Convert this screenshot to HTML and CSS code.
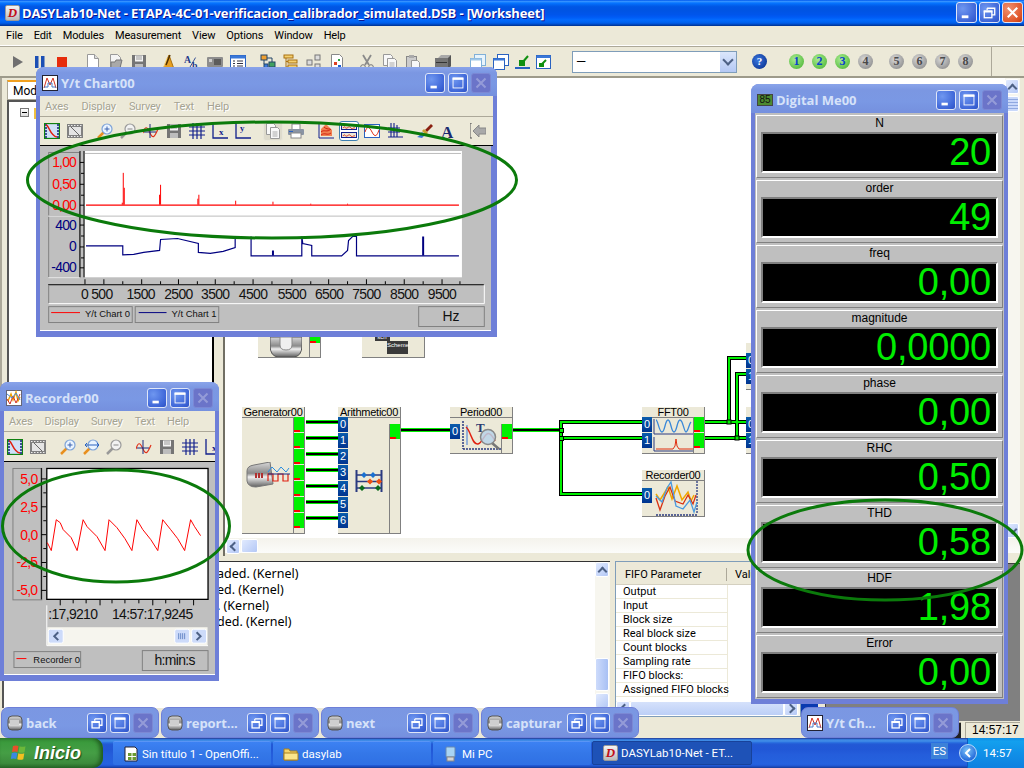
FILE: index.html
```html
<!DOCTYPE html>
<html lang="en">
<head>
<meta charset="utf-8">
<title>DASYLab10-Net</title>
<link rel="stylesheet" href="styles.css">
</head>
<body>
<svg class="defs" width="0" height="0" aria-hidden="true">
  <defs>
    <linearGradient id="metal" x1="0" y1="0" x2="0" y2="1"><stop offset="0" stop-color="#d8d8d8"/><stop offset=".45" stop-color="#8a8a8a"/><stop offset=".6" stop-color="#f0f0f0"/><stop offset="1" stop-color="#606060"/></linearGradient>
    <symbol id="c-min" viewBox="0 0 20 20"><rect x="5" y="13" width="7" height="3" fill="#fff"/></symbol>
    <symbol id="c-max" viewBox="0 0 20 20"><rect x="4.500" y="4.500" width="11" height="11" fill="none" stroke="#fff"/><rect x="4" y="4" width="12" height="2.500" fill="#fff"/></symbol>
    <symbol id="c-res" viewBox="0 0 20 20"><path d="M7.500 5.500h8v7h-3M7.500 5.500v2" fill="none" stroke="#fff" stroke-width="1.400"/><rect x="4.500" y="8.500" width="8" height="7" fill="none" stroke="#fff" stroke-width="1.400"/><rect x="4" y="8" width="9" height="2" fill="#fff"/></symbol>
    <symbol id="c-x" viewBox="0 0 20 20"><path d="M5 5l10 10M15 5L5 15" stroke="#fff" stroke-width="2.200" fill="none"/></symbol>
    <symbol id="w-line" viewBox="0 0 16 16"><rect x=".5" y=".5" width="15" height="15" fill="#fff" stroke="#223"/><path d="M2 13L5 3l3 7 3-7 3 10" fill="none" stroke="#d43020"/><path d="M2 12h4V8h4v4h4" fill="none" stroke="#4a78c8"/></symbol>
    <symbol id="w-rec" viewBox="0 0 16 16"><rect x=".5" y=".5" width="15" height="15" fill="#fff" stroke="#667"/><path d="M2 11l3-7 2 6 3-8 2 9 2-4" fill="none" stroke="#f0a000" stroke-width="1.400"/><path d="M1 9l3 5 3-8 3 7 4-9" fill="none" stroke="#d43020"/><path d="M1 4l5 4 4-5 4 7" fill="none" stroke="#4a90d8"/></symbol>
    <symbol id="w-block" viewBox="0 0 16 16"><rect x="1" y="1" width="14" height="14" rx="4" fill="url(#metal)" stroke="#555"/><rect x="3" y="5" width="9" height="5" fill="#cfcfcf"/></symbol>
    <symbol id="i-play" viewBox="0 0 16 16"><path d="M4 2l10 6-10 6z" fill="#707070"/></symbol>
    <symbol id="i-pause" viewBox="0 0 16 16"><rect x="3" y="2" width="3.500" height="12" fill="#1b4fb4"/><rect x="9" y="2" width="3.500" height="12" fill="#1b4fb4"/></symbol>
    <symbol id="i-stop" viewBox="0 0 16 16"><rect x="2" y="3" width="10" height="10" fill="#e62c0c"/></symbol>
    <symbol id="i-new" viewBox="0 0 16 16"><path d="M2.500.5h7l4 4v11h-11z" fill="#fff" stroke="#999"/><path d="M9.500.5v4h4" fill="#ddd" stroke="#999"/></symbol>
    <symbol id="i-open" viewBox="0 0 16 16"><path d="M2.500.5h7l3 3v11h-10z" fill="#f4f4f4" stroke="#999"/><path d="M3 8h4l1-2h6l-2 8H3z" fill="#a9a9a9" stroke="#777"/></symbol>
    <symbol id="i-save" viewBox="0 0 16 16"><path d="M1 1h14v14H1z" fill="#757575"/><rect x="4" y="1.500" width="8" height="6" fill="#f4f4f4"/><path d="M5 3h6M5 5h6" stroke="#999"/><rect x="4" y="10" width="8" height="5" fill="#bdbdbd"/></symbol>
    <symbol id="i-metro" viewBox="0 0 16 16"><path d="M8 1l5 14H2z" fill="#e8a020" stroke="#a87010"/><path d="M9 1L5 11" stroke="#503000" stroke-width="1.500"/><path d="M2 15L6 4" stroke="#ffd878"/></symbol>
    <symbol id="i-ab" viewBox="0 0 18 18"><text x="0" y="10" class="sy-a">A</text><path d="M6 16L13 4" stroke="#1e3a8a"/><text x="9" y="17" class="sy-a">b</text></symbol>
    <symbol id="i-card" viewBox="0 0 16 16"><rect y="3" width="16" height="10" rx="1" fill="#8d8d8d"/><rect x="2" y="5" width="3" height="3" fill="#cfcfcf"/><rect x="7" y="5" width="7" height="6" fill="#5c5c5c"/></symbol>
    <symbol id="i-list" viewBox="0 0 16 16"><rect x=".5" y="1.500" width="15" height="13" fill="#fff" stroke="#2a62c0"/><rect x=".5" y="1.500" width="15" height="3" fill="#3a78d8"/><path d="M3 7h2M7 7h6M3 9.500h2M7 9.500h6M3 12h2M7 12h6" stroke="#334"/></symbol>
    <symbol id="i-tree" viewBox="0 0 16 16"><rect x="1" y="1" width="6" height="5" fill="#f0a030" stroke="#246"/><rect x="9" y="8" width="6" height="5" fill="#40a060" stroke="#246"/><rect x="4" y="10" width="4" height="5" fill="#3a78d8" stroke="#246"/><path d="M4 6v4M7 4h5v4" stroke="#246" fill="none"/></symbol>
    <symbol id="i-tree2" viewBox="0 0 16 16"><rect x="1" y="1" width="9" height="3" fill="#f4d070" stroke="#a87010"/><rect x="5" y="6" width="9" height="3" fill="#f4d070" stroke="#a87010"/><rect x="5" y="11" width="9" height="3" fill="#f4d070" stroke="#a87010"/><path d="M3 4v9h2M3 7.500h2" stroke="#a87010" fill="none"/></symbol>
    <symbol id="i-boxes" viewBox="0 0 16 16"><rect x="1" y="6" width="5" height="5" fill="#ddd" stroke="#777"/><rect x="9" y="1" width="5" height="5" fill="#ddd" stroke="#777"/><rect x="9" y="10" width="5" height="5" fill="#ddd" stroke="#777"/></symbol>
    <symbol id="i-docc" viewBox="0 0 16 16"><path d="M2.500.5h8l3 3v12h-11z" fill="#fff" stroke="#888"/><rect x="5" y="8" width="3" height="3" fill="#e04020"/><rect x="9" y="5" width="2" height="2" fill="#30a040"/><rect x="9" y="11" width="3" height="3" fill="#2060d0"/></symbol>
    <symbol id="i-cut" viewBox="0 0 16 16"><path d="M4 1l6 10M12 1L6 11" stroke="#8a8a8a" stroke-width="1.800"/><circle cx="4" cy="13" r="2.300" fill="none" stroke="#777"/><circle cx="12" cy="13" r="2.300" fill="none" stroke="#777"/></symbol>
    <symbol id="i-copy" viewBox="0 0 16 16"><path d="M1.500.5h7l2 2v9h-9z" fill="#f8f8f8" stroke="#999"/><path d="M5.500 4.500h7l2 2v9h-9z" fill="#f8f8f8" stroke="#999"/><path d="M7.500 9h5M7.500 11h5M7.500 13h5" stroke="#aaa"/></symbol>
    <symbol id="i-paste" viewBox="0 0 16 16"><rect x="1.500" y="2.500" width="10" height="12" fill="#ccc" stroke="#888"/><rect x="4" y="1" width="5" height="3" fill="#aaa"/><path d="M6.500 6.500h6l2 2v7h-8z" fill="#f8f8f8" stroke="#999"/></symbol>
    <symbol id="i-box3d" viewBox="0 0 16 16"><path d="M3 4l3-3h10v3H3z" fill="#a9a9a9"/><rect y="4" width="13" height="12" fill="#757575"/><rect x="1" y="8" width="11" height="1" fill="#333"/><path d="M13 4l3-3v11l-3 4z" fill="#555"/></symbol>
    <symbol id="i-cas1" viewBox="0 0 16 16"><rect x="4.500" y=".5" width="11" height="11" fill="#e8f4fc" stroke="#80b0d8"/><rect x=".5" y="4.500" width="11" height="11" fill="#fff" stroke="#80b0d8"/><rect x=".5" y="4.500" width="11" height="2" fill="#a0c8e8"/></symbol>
    <symbol id="i-cas2" viewBox="0 0 16 16"><rect x="4.500" y=".5" width="11" height="11" fill="#fff" stroke="#2a62c0"/><rect x=".5" y="4.500" width="11" height="11" fill="#fff" stroke="#2a62c0"/><rect x=".5" y="4.500" width="11" height="2" fill="#3a78d8"/></symbol>
    <symbol id="i-dn" viewBox="0 0 16 16"><rect x="4" y="6" width="6" height="6" fill="#109010"/><path d="M7 9l6-7" stroke="#109010" stroke-width="2"/><path d="M0 14h15" stroke="#2a62c0" stroke-width="2"/></symbol>
    <symbol id="i-win" viewBox="0 0 16 16"><rect x=".5" y="1.500" width="14" height="13" fill="#fff" stroke="#2a62c0"/><rect x=".5" y="1.500" width="14" height="2.500" fill="#3a78d8"/><rect x="3" y="9" width="5" height="4" fill="#109010"/><path d="M5 11l5-5" stroke="#109010" stroke-width="2"/></symbol>
    <symbol id="i-film-c" viewBox="0 0 16 16"><rect x=".5" y=".5" width="15" height="15" fill="#cfe0f8" stroke="#108010" stroke-width="1.300"/><path d="M2 1v14M14 1v14" stroke="#1a2a80" stroke-width="1.600" stroke-dasharray="2 1"/><path d="M2 2c3 0 4 11 11 12" fill="none" stroke="#e02010" stroke-width="1.600"/></symbol>
    <symbol id="i-film" viewBox="0 0 16 16"><rect y="1" width="16" height="14" fill="#808080"/><rect x="2" y="4" width="12" height="8" fill="#e4e4e4"/><path d="M1 2.500h14M1 13.500h14" stroke="#eee" stroke-dasharray="1.500 1.500"/><path d="M4 4l8 8" stroke="#666"/></symbol>
    <symbol id="i-zi" viewBox="0 0 16 16"><path d="M1 15l6-6" stroke="#e89020" stroke-width="2.500"/><circle cx="10" cy="6" r="5" fill="#eaf4ff" stroke="#7fa4d8" stroke-width="1.200"/><path d="M7.500 6h5M10 3.500v5" stroke="#3a62b0"/></symbol>
    <symbol id="i-zh" viewBox="0 0 16 16"><path d="M1 15l6-6" stroke="#e89020" stroke-width="2.500"/><circle cx="10" cy="6" r="5" fill="#eaf4ff" stroke="#7fa4d8" stroke-width="1.200"/><path d="M2 6h14M4 4L2 6l2 2M14 4l2 2-2 2" fill="none" stroke="#2a62c0"/></symbol>
    <symbol id="i-zo" viewBox="0 0 16 16"><path d="M1 15l6-6" stroke="#999" stroke-width="2.500"/><circle cx="10" cy="6" r="5" fill="#f2f2f2" stroke="#9a9a9a" stroke-width="1.200"/><path d="M7.500 6h5" stroke="#888"/></symbol>
    <symbol id="i-cur" viewBox="0 0 16 16"><path d="M0 10c2-7 4-7 7 0s5 3 8-4" fill="none" stroke="#e03018" stroke-width="1.200"/><path d="M7 1v14M1 9h12" stroke="#1a2a80"/></symbol>
    <symbol id="i-grid" viewBox="0 0 16 16"><path d="M4 0v16M8 0v16M12 0v16M0 4h16M0 8h16M0 12h16" stroke="#12208c" stroke-width="1.200"/></symbol>
    <symbol id="i-xa" viewBox="0 0 16 16"><path d="M1 0v15h15" fill="none" stroke="#12208c" stroke-width="1.300"/><text x="7" y="12" class="sy-x">x</text></symbol>
    <symbol id="i-ya" viewBox="0 0 16 16"><path d="M1 0v15h15" fill="none" stroke="#12208c" stroke-width="1.300"/><text x="5" y="8" class="sy-x">y</text></symbol>
    <symbol id="i-print" viewBox="0 0 16 16"><rect x="4" y="1" width="8" height="6" fill="#fff" stroke="#888"/><rect y="6" width="16" height="6" rx="1" fill="#8a94a4"/><rect x="3" y="10" width="10" height="5" fill="#fff" stroke="#888"/><rect x="1" y="8" width="4" height="1" fill="#2a62c0"/></symbol>
    <symbol id="i-map" viewBox="0 0 16 16"><path d="M1 0v15h15" fill="none" stroke="#12208c"/><path d="M3 13V6l5-5 6 6v6z" fill="#f08050"/><path d="M3 9c3-3 6 1 10-3M3 12c4-3 6 1 10-2M6 4c2 2 4 2 6 2" fill="none" stroke="#d02010"/></symbol>
    <symbol id="i-w2" viewBox="0 0 16 16"><rect x=".5" y="1.500" width="15" height="5" fill="#ece9d8" stroke="#12208c"/><rect x=".5" y="9.500" width="15" height="5" fill="#ece9d8" stroke="#12208c"/><path d="M2 5c2-3 2 1 4 0s2-2 4 0 2-1 4 0M2 13c2-3 2 1 4 0s2-2 4 0 2-1 4 0" fill="none" stroke="#e03018"/></symbol>
    <symbol id="i-w1" viewBox="0 0 16 16"><rect x=".5" y="1.500" width="15" height="13" fill="#fff" stroke="#2a62c0"/><path d="M1 9c2-6 4-6 7 0s5 4 7-2" fill="none" stroke="#e03018"/></symbol>
    <symbol id="i-tick" viewBox="0 0 16 16"><path d="M4 0v14M7 0v14M10 2v12M1 14h15M1 5h12M1 9h12" stroke="#12208c" stroke-width="1.100"/></symbol>
    <symbol id="i-brush" viewBox="0 0 16 16"><path d="M8 7l6-6 2 2-6 6z" fill="#8a2010"/><path d="M7 6l4 4-2 2-4-4z" fill="#c8a030"/><path d="M5 9l3 3-3 3-5-1c3-1 3-3 5-5z" fill="#3a78d8"/></symbol>
    <symbol id="i-a" viewBox="0 0 16 16"><text x="1" y="15" class="sy-big">A</text></symbol>
    <symbol id="i-back" viewBox="0 0 16 16"><path d="M2 0H0v15h2" fill="none" stroke="#555"/><path d="M3 8l6-6v3h7v6H9v3z" fill="#a9a9a9" stroke="#888"/></symbol>
  </defs>
</svg>

<div class="screen">
  <div class="app">
    <header class="titlebar">
      <span class="app-logo">D</span>
      <h1 class="app-title">DASYLab10-Net - ETAPA-4C-01-verificacion_calibrador_simulated.DSB - [Worksheet]</h1>
      <span class="cap-btn blue big"><svg><use href="#c-min"/></svg></span>
      <span class="cap-btn blue big"><svg><use href="#c-res"/></svg></span>
      <span class="cap-btn red big"><svg><use href="#c-x"/></svg></span>
    </header>
    <nav class="menubar">
      <span>File</span><span>Edit</span><span>Modules</span><span>Measurement</span><span>View</span><span>Options</span><span>Window</span><span>Help</span>
    </nav>
    <div class="toolbar">
      <div class="tb-group"><svg class="ic"><use href="#i-play"/></svg><svg class="ic"><use href="#i-pause"/></svg><svg class="ic"><use href="#i-stop"/></svg></div>
      <div class="tb-group"><svg class="ic"><use href="#i-new"/></svg><svg class="ic"><use href="#i-open"/></svg><svg class="ic"><use href="#i-save"/></svg></div>
      <div class="tb-group"><svg class="ic"><use href="#i-metro"/></svg><svg class="ic"><use href="#i-ab"/></svg><svg class="ic"><use href="#i-card"/></svg><svg class="ic"><use href="#i-list"/></svg></div>
      <div class="tb-group"><svg class="ic"><use href="#i-tree"/></svg><svg class="ic"><use href="#i-tree2"/></svg><svg class="ic"><use href="#i-boxes"/></svg><svg class="ic"><use href="#i-docc"/></svg></div>
      <div class="tb-group"><svg class="ic"><use href="#i-cut"/></svg><svg class="ic"><use href="#i-copy"/></svg><svg class="ic"><use href="#i-paste"/></svg></div>
      <div class="tb-group"><svg class="ic"><use href="#i-box3d"/></svg></div>
      <div class="tb-group tb-wide"><svg class="ic"><use href="#i-cas1"/></svg><svg class="ic"><use href="#i-cas2"/></svg></div>
      <div class="tb-group tb-tight"><svg class="ic"><use href="#i-dn"/></svg><svg class="ic"><use href="#i-win"/></svg></div>
      <div class="combo"><span class="combo-text">—</span><span class="combo-btn"></span></div>
      <span class="help">?</span>
      <div class="nums">
        <span class="num on">1</span><span class="num on">2</span><span class="num on">3</span><span class="num">4</span>
        <span class="num sep">5</span><span class="num">6</span><span class="num">7</span><span class="num">8</span>
      </div>
      <span class="tb-end"></span>
    </div>
    <main class="work">
      <div class="work-top">
        <aside class="side">
          <div class="side-panel">
            <div class="tab">Modules</div>
            <div class="tree"><span class="tree-toggle"></span><span class="tree-folder"></span></div>
          </div>
          <div class="splitter"></div>
        </aside>
        <div class="canvas-wrap">
          <div class="canvas-row">
            <div class="canvas">
              <svg class="wires" viewBox="225 78 780 460">
                <path class="w-edge-g" d="M306 422H338M306 438H338M306 454H338M306 470H338M306 486H338M306 502H338M306 518H338M401 430H450M513 430H561"/>
                <path class="w-core-k" d="M306 422H338M306 438H338M306 454H338M306 470H338M306 486H338M306 502H338M306 518H338M401 430H450M513 430H561"/>
                <path class="w-edge-k" d="M561 430V422H642M561 422V494H642M561 438H642M705 422H746M705 438H746M729 422V358H746M737 438V374H746"/>
                <path class="w-core-g" d="M561 430V422H642M561 422V494H642M561 438H642M705 422H746M705 438H746M729 422V358H746M737 438V374H746"/>
                <g class="junctions"><rect x="559.500" y="428.500" width="4" height="4"/><rect x="559.500" y="436.500" width="4" height="4"/><rect x="727" y="420" width="4" height="4"/><rect x="735" y="436" width="4" height="4"/></g>
              </svg>

              <div class="node n-up1">
                <div class="node-body"><div class="art art-wide"><svg class="art-up1" viewBox="0 0 32 20"><path d="M0 0h32v8q0 12-9 12H9Q0 20 0 8z" fill="url(#metal)" stroke="#555"/><path d="M10 0h12v8q0 5-6 5t-6-5z" fill="#f0f0f0" stroke="#888"/></svg></div>
                <div class="ports-out"><span class="port-out short"></span></div></div>
              </div>
              <div class="node n-up2">
                <div class="node-body"><div class="ports-in"><span class="port-in short"></span></div>
                  <div class="art art-scheme"><span class="scheme-a">sch</span><span class="scheme-b">Scheme</span></div></div>
              </div>

              <div class="node n-gen">
                <div class="node-title">Generator00</div>
                <div class="node-body">
                  <div class="art"><svg class="art-gen" viewBox="0 0 44 26">
                    <path d="M1 9q0-5 7-6l16-3 3 22-17 3q-8 0-9-6z" fill="url(#metal)" stroke="#777"/>
                    <path d="M10 11v5M13 11v5M16 11v5" stroke="#b03030" stroke-width="2"/>
                    <path d="M22 10l4-5 5 5 4-5 5 5 3-4" fill="none" stroke="#2a8ee0"/>
                    <path d="M22 19v-7h5v7h5v-7h5v7h5v-7" fill="none" stroke="#e02010" stroke-width="1.200"/>
                    <path d="M22 12h22" stroke="#1a2a80"/>
                  </svg></div>
                  <div class="ports-out"><span class="port-out"></span><span class="port-out"></span><span class="port-out"></span><span class="port-out"></span><span class="port-out"></span><span class="port-out"></span><span class="port-out"></span></div>
                </div>
              </div>
              <div class="node n-ari">
                <div class="node-title">Arithmetic00</div>
                <div class="node-body">
                  <div class="ports-in"><span class="port-in">0</span><span class="port-in">1</span><span class="port-in">2</span><span class="port-in">3</span><span class="port-in">4</span><span class="port-in">5</span><span class="port-in">6</span></div>
                  <div class="art"><svg class="art-ari" viewBox="0 0 28 22">
                    <path d="M1.500 0v22M26.500 0v22" stroke="#2a3a80" stroke-width="2"/><path d="M1 5h26M1 11.500h26M1 18h26" stroke="#2a3a80" stroke-width="1.500"/>
                    <path d="M6 5l3-3 3 3-3 3zM15 5l3-3 3 3-3 3z" fill="#1a70d0"/><path d="M12 11.500l3-3 3 3-3 3zM21 11.500l3-3 3 3-3 3z" fill="#f05010"/><path d="M4 18l3-3 3 3-3 3zM20 18l3-3 3 3-3 3z" fill="#0a6a1a"/>
                  </svg></div>
                  <div class="ports-out offset"><span class="port-out"></span></div>
                </div>
              </div>
              <div class="node n-per">
                <div class="node-title">Period00</div>
                <div class="node-body">
                  <div class="ports-in offset"><span class="port-in">0</span></div>
                  <div class="art"><svg class="art-per" viewBox="0 0 40 32">
                    <path d="M2 2v28M2 30h38" stroke="#2a3a80" stroke-dasharray="2 1" stroke-width="1.500"/>
                    <path d="M6 6v20" stroke="#3a78d8"/><path d="M5 8c5 4 6 18 12 17S25 4 34 22" fill="none" stroke="#e02010" stroke-width="1.500"/>
                    <text x="15" y="13" class="sy-t">T</text>
                    <path d="M31 24l7 6" stroke="#777" stroke-width="2.500"/><circle cx="27" cy="18" r="7.500" fill="#b8d4ea" fill-opacity=".85" stroke="#888" stroke-width="1.500"/>
                  </svg></div>
                  <div class="ports-out offset"><span class="port-out"></span></div>
                </div>
              </div>
              <div class="node n-fft">
                <div class="node-title">FFT00</div>
                <div class="node-body">
                  <div class="ports-in"><span class="port-in">0</span><span class="port-in">1</span></div>
                  <div class="art"><svg class="art-fft" viewBox="0 0 40 33">
                    <path d="M1 0v15h39M1 18v14h39" stroke="#2a3a80" fill="none"/>
                    <path d="M3 1c2 0 3 12 6 12s3-12 6-12 3 12 6 12 3-12 6-12 4 12 6 12 3-8 5-10" fill="none" stroke="#3a88d8" stroke-width="1.300"/>
                    <path d="M3 30h17l2-3 1-7 1 7 2 3h14" fill="none" stroke="#e03010"/>
                  </svg></div>
                  <div class="ports-out"><span class="port-out"></span><span class="port-out"></span></div>
                </div>
              </div>
              <div class="node n-rec">
                <div class="node-title">Recorder00</div>
                <div class="node-body">
                  <div class="ports-in offset"><span class="port-in">0</span></div>
                  <div class="art"><svg class="art-rec" viewBox="0 0 44 36">
                    <path d="M42 1v32M1 35h42" stroke="#2a3a80" stroke-width="1.300" stroke-dasharray="2 1"/>
                    <path d="M1 14l4 6 5-8 3-5 4 12 5-13 5 14 6-8 3 9 3-6" fill="none" stroke="#f0a800" stroke-width="1.500"/>
                    <path d="M1 18l4 12 5-14 5-9 5 14 8 3 5-9 5 9 3-9" fill="none" stroke="#d83010" stroke-width="1.300"/>
                    <path d="M1 16l6 6 5-14 4-6 5 24 7 3 7-9 4 12 3-10" fill="none" stroke="#4a9ae0" stroke-width="1.300"/>
                  </svg></div>
                </div>
              </div>
              <div class="node n-r1"><div class="ports-in offset-b"><span class="port-in">0</span><span class="port-in">1</span></div></div>
              <div class="node n-r2"><div class="ports-in offset-t"><span class="port-in">0</span><span class="port-in">1</span></div></div>
            </div>
            <div class="vscroll">
              <span class="sb-btn up"></span><span class="sb-thumb"></span><span class="sb-fill"></span><span class="sb-btn down"></span>
            </div>
          </div>
          <div class="hscroll"><span class="sb-btn left"></span><span class="sb-thumb-h"></span></div>
        </div>
      </div>
      <div class="work-bottom">
        <div class="log">
          <div class="log-text">
            <p>aded. (Kernel)</p>
            <p>ed. (Kernel)</p>
            <p>. (Kernel)</p>
            <p>ded. (Kernel)</p>
          </div>
          <div class="log-scroll"><span class="sb-btn up"></span><span class="sb-fill"></span><span class="sb-thumb-v"></span><span class="sb-btn blank"></span></div>
        </div>
        <div class="fifo">
          <div class="fifo-head"><span class="fh-a">FIFO Parameter</span><span class="fh-b">Value</span></div>
          <div class="fifo-rows">
            <div class="fr">Output</div><div class="fr">Input</div><div class="fr">Block size</div><div class="fr">Real block size</div><div class="fr">Count blocks</div><div class="fr">Sampling rate</div><div class="fr">FIFO blocks:</div><div class="fr">Assigned FIFO blocks</div>
          </div>
          <div class="fifo-scroll"><span class="sb-btn left"></span><span class="sb-thumb-f"></span><span class="sb-btn right"></span></div>
        </div>
        <div class="strip"><span class="strip-blue"></span></div>
        <div class="mdi"></div>
      </div>
    </main>
    <footer class="status"><span class="st-cell st-dark"></span><span class="st-cell">14:57:17</span></footer>
  </div>

  <section class="win w-chart">
    <header class="cap"><svg class="cap-icon"><use href="#w-line"/></svg><span class="cap-text">Y/t Chart00</span>
      <span class="cap-btn blue"><svg><use href="#c-min"/></svg></span><span class="cap-btn blue"><svg><use href="#c-max"/></svg></span><span class="cap-btn dim"><svg><use href="#c-x"/></svg></span></header>
    <nav class="imenu"><span>Axes</span><span>Display</span><span>Survey</span><span>Text</span><span>Help</span></nav>
    <div class="itools">
      <div class="tb-group"><svg class="ic"><use href="#i-film-c"/></svg><svg class="ic"><use href="#i-film"/></svg></div>
      <div class="tb-group"><svg class="ic"><use href="#i-zi"/></svg><svg class="ic"><use href="#i-zo"/></svg><svg class="ic"><use href="#i-cur"/></svg><svg class="ic"><use href="#i-save"/></svg><svg class="ic"><use href="#i-grid"/></svg><svg class="ic"><use href="#i-xa"/></svg><svg class="ic"><use href="#i-ya"/></svg></div>
      <div class="tb-group"><span class="ic-btn soft"><svg class="ic"><use href="#i-copy"/></svg></span><svg class="ic"><use href="#i-print"/></svg></div>
      <div class="tb-group"><svg class="ic"><use href="#i-map"/></svg><span class="ic-btn sel"><svg class="ic"><use href="#i-w2"/></svg></span><svg class="ic"><use href="#i-w1"/></svg><svg class="ic"><use href="#i-tick"/></svg></div>
      <div class="tb-group"><svg class="ic"><use href="#i-brush"/></svg><svg class="ic"><use href="#i-a"/></svg></div>
      <div class="tb-group"><svg class="ic"><use href="#i-back"/></svg></div>
    </div>
    <svg class="plot plot-chart" viewBox="40 147 451 185">
      <rect x="47.500" y="153.500" width="31" height="64" class="lblbox"/><rect x="47.500" y="217.500" width="31" height="62" class="lblbox"/>
      <path d="M47 217.500H79M47 279.500H79" stroke="#fff"/>
      <path d="M79 152V279M83 152V279" class="ax"/>
      <path d="M79 163.500h4M79 185.500h4M79 206.500h4M79 226.500h4M79 248.500h4M79 269.500h4M80 174.500h3M80 196.500h3M80 237.500h3M80 259.500h3" class="ax"/>
      <rect x="84" y="152" width="379" height="127" fill="#fff"/>
      <path d="M84 154.500H462M84 217.500H462" stroke="#bbb"/>
      <text x="75" y="168" class="yl red">1,00</text><text x="75" y="190" class="yl red">0,50</text><text x="75" y="211" class="yl red">0,00</text>
      <text x="75" y="231" class="yl navy">400</text><text x="75" y="253" class="yl navy">0</text><text x="75" y="274" class="yl navy">-400</text>
      <path d="M85 206.500H460" stroke="#f00" stroke-width="1.300" fill="none"/>
      <path d="M122.500 206V174M123.500 206V189M121.500 206V204M160 206V186M159 206V196M198.500 206V196M197.500 206V200M235.500 206V202M273 206V203M311 206V205M348 206V205" stroke="#f00" fill="none"/>
      <path d="M85 247.500H122V256.500L133 256 143 254 159 252 160 241 177 240 198 245V254L210 255 223 253 235 249V238M251 238V257.500H302V238L303 245 312 247V257.500H342L348 252 349 242 353 238H357V257.500H460" fill="none" stroke="#000080" stroke-width="1.200"/>
      <path d="M424 257V238M273 257V252" stroke="#000080" stroke-width="2"/>
      <path d="M47 286.500H485" stroke="#000" fill="none"/>
      <path d="M84 281v5M103 281v5M141 281v5M178 281v5M215 281v5M253 281v5M292 281v5M329 281v5M367 281v5M405 281v5M443 281v5M122 283v3M160 283v3M197 283v3M234 283v3M272 283v3M311 283v3M348 283v3M386 283v3M424 283v3M461 283v3" stroke="#000" fill="none"/>
      <path d="M47.500 305.500H485.500V287" fill="none" stroke="#fff"/><path d="M47.500 305V287" stroke="#808080"/>
      <text x="83.500" y="301" class="xl mid">0</text><text x="101" y="301" class="xl mid">500</text><text x="140" y="301" class="xl mid">1500</text><text x="178" y="301" class="xl mid">2500</text><text x="215" y="301" class="xl mid">3500</text><text x="253" y="301" class="xl mid">4500</text><text x="292" y="301" class="xl mid">5500</text><text x="329.500" y="301" class="xl mid">6500</text><text x="367" y="301" class="xl mid">7500</text><text x="405" y="301" class="xl mid">8500</text><text x="443" y="301" class="xl mid">9500</text>
      <rect x="47.500" y="308.500" width="84" height="16" class="bevel"/><rect x="134.500" y="308.500" width="84" height="16" class="bevel"/><rect x="419.500" y="308.500" width="66" height="20" class="bevel"/>
      <path d="M50 314.500H79" stroke="#f00"/><path d="M138 314.500H166" stroke="#000080"/>
      <text x="84" y="319" class="lg">Y/t Chart 0</text><text x="171" y="319" class="lg">Y/t Chart 1</text><text x="452" y="323" class="xl mid hz">Hz</text>
    </svg>
  </section>

  <section class="win w-rec">
    <header class="cap"><svg class="cap-icon"><use href="#w-rec"/></svg><span class="cap-text">Recorder00</span>
      <span class="cap-btn blue"><svg><use href="#c-min"/></svg></span><span class="cap-btn blue"><svg><use href="#c-max"/></svg></span><span class="cap-btn dim"><svg><use href="#c-x"/></svg></span></header>
    <nav class="imenu imenu-rec"><span>Axes</span><span>Display</span><span>Survey</span><span>Text</span><span>Help</span></nav>
    <div class="itools itools-rec">
      <div class="tb-group"><svg class="ic"><use href="#i-film-c"/></svg><svg class="ic"><use href="#i-film"/></svg></div>
      <div class="tb-group"><svg class="ic"><use href="#i-zi"/></svg><svg class="ic"><use href="#i-zh"/></svg><svg class="ic"><use href="#i-zo"/></svg></div>
      <div class="tb-group"><svg class="ic"><use href="#i-cur"/></svg><svg class="ic"><use href="#i-save"/></svg><svg class="ic"><use href="#i-grid"/></svg><svg class="ic"><use href="#i-xa"/></svg></div>
    </div>
    <svg class="plot plot-rec" viewBox="4 462 211 213">
      <rect x="12.500" y="468.500" width="29" height="132" class="lblbox"/>
      <path d="M41 468V600" class="ax"/>
      <path d="M41 479h5M41 507h5M41 535h5M41 563h5M41 591h5M43 493h3M43 521h3M43 549h3M43 577h3" class="ax"/>
      <rect x="46.500" y="468.500" width="162" height="131.500" fill="#fff" stroke="#000" stroke-width="1.300"/>
      <text x="37" y="484" class="yl red">5,0</text><text x="37" y="512" class="yl red">2,5</text><text x="37" y="540" class="yl red">0,0</text><text x="37" y="568" class="yl red">-2,5</text><text x="37" y="596" class="yl red">-5,0</text>
      <polyline fill="none" stroke="#f00" points="47,543 51,551 56,520 60,523 63,530 71,538 77,551 83,520 87,527 97,537 105,551 109,520 117,528 125,539 132,551 137,520 143,530 151,540 158,551 163,520 171,530 178,539 185,551 191,520 195,527 201,536"/>
      <path d="M60 600v6M73 600v4M86 600v4M100 600v6M112 600v4M125 600v4M139 600v4M153 600v6M166 600v4M180 600v4M194 600v6" stroke="#000"/>
      <text x="48" y="620" class="xl">:17,9210</text><text x="112" y="620" class="xl">14:57:17,9245</text>
      <rect x="47" y="628" width="161" height="18" fill="#f6f5ee"/>
      <path d="M46.500 606V646.500H208.500" fill="none" stroke="#fff"/>
      <rect x="48" y="630" width="15" height="14" rx="2" class="sbt"/><path d="M58 633l-4 4 4 4" class="chev"/>
      <rect x="175" y="630" width="15" height="14" rx="2" class="sbt"/><path d="M179 634v6M181 634v6M183 634v6M185 634v6" stroke="#6a8ac8"/>
      <rect x="192" y="630" width="15" height="14" rx="2" class="sbt"/><path d="M197 633l4 4-4 4" class="chev"/>
      <rect x="13.500" y="652.500" width="67" height="16" class="bevel"/><path d="M16 659.500H26" stroke="#f00"/><text x="33" y="664" class="lg">Recorder 0</text>
      <rect x="142.500" y="651.500" width="66" height="20" class="bevel"/><text x="175" y="666" class="xl mid">h:min:s</text>
    </svg>
  </section>

  <section class="win w-meter">
    <header class="cap"><span class="meter-icon">85</span><span class="cap-text">Digital Me00</span>
      <span class="cap-btn blue"><svg><use href="#c-min"/></svg></span><span class="cap-btn blue"><svg><use href="#c-max"/></svg></span><span class="cap-btn dim"><svg><use href="#c-x"/></svg></span></header>
    <div class="meters">
      <div class="meter"><div class="meter-label">N</div><div class="meter-value">20</div></div>
      <div class="meter"><div class="meter-label">order</div><div class="meter-value">49</div></div>
      <div class="meter"><div class="meter-label">freq</div><div class="meter-value">0,00</div></div>
      <div class="meter"><div class="meter-label">magnitude</div><div class="meter-value">0,0000</div></div>
      <div class="meter"><div class="meter-label">phase</div><div class="meter-value">0,00</div></div>
      <div class="meter"><div class="meter-label">RHC</div><div class="meter-value">0,50</div></div>
      <div class="meter"><div class="meter-label">THD</div><div class="meter-value">0,58</div></div>
      <div class="meter"><div class="meter-label">HDF</div><div class="meter-value">1,98</div></div>
      <div class="meter"><div class="meter-label">Error</div><div class="meter-value">0,00</div></div>
    </div>
  </section>

  <section class="win-min m1"><svg class="cap-icon"><use href="#w-block"/></svg><span class="cap-text">back</span><span class="cap-btn blue"><svg><use href="#c-res"/></svg></span><span class="cap-btn blue"><svg><use href="#c-max"/></svg></span><span class="cap-btn dim"><svg><use href="#c-x"/></svg></span></section>
  <section class="win-min m2"><svg class="cap-icon"><use href="#w-block"/></svg><span class="cap-text">report...</span><span class="cap-btn blue"><svg><use href="#c-res"/></svg></span><span class="cap-btn blue"><svg><use href="#c-max"/></svg></span><span class="cap-btn dim"><svg><use href="#c-x"/></svg></span></section>
  <section class="win-min m3"><svg class="cap-icon"><use href="#w-block"/></svg><span class="cap-text">next</span><span class="cap-btn blue"><svg><use href="#c-res"/></svg></span><span class="cap-btn blue"><svg><use href="#c-max"/></svg></span><span class="cap-btn dim"><svg><use href="#c-x"/></svg></span></section>
  <section class="win-min m4"><svg class="cap-icon"><use href="#w-block"/></svg><span class="cap-text">capturar</span><span class="cap-btn blue"><svg><use href="#c-res"/></svg></span><span class="cap-btn blue"><svg><use href="#c-max"/></svg></span><span class="cap-btn dim"><svg><use href="#c-x"/></svg></span></section>
  <section class="win-min m5"><svg class="cap-icon"><use href="#w-line"/></svg><span class="cap-text">Y/t Ch...</span><span class="cap-btn blue"><svg><use href="#c-res"/></svg></span><span class="cap-btn blue"><svg><use href="#c-max"/></svg></span><span class="cap-btn dim"><svg><use href="#c-x"/></svg></span></section>

  <svg class="marks" viewBox="0 0 1024 768">
    <ellipse cx="272" cy="180" rx="244.500" ry="58"/>
    <ellipse cx="116" cy="526" rx="113.500" ry="56"/>
    <ellipse cx="885" cy="550" rx="137" ry="50"/>
  </svg>

  <footer class="taskbar">
    <div class="start"><svg class="flag" viewBox="0 0 18 18"><path d="M3 2q3-1 5.500 0L7.500 8Q5 7 2 8z" fill="#e8502a"/><path d="M9.500 2.200q3 1 6 0l-1 6q-3 1-6 0z" fill="#6cb83a"/><path d="M1.800 9q3-1 5.500 0l-1 6q-3-1-5.500 0z" fill="#3a88e0"/><path d="M8.300 9.200q3 1 6 0l-1 6q-3 1-6 0z" fill="#f4c020"/></svg><span>Inicio</span></div>
    <div class="tasks">
      <div class="task"><svg class="task-ic" viewBox="0 0 16 16"><path d="M2 1h10l2 2v12H2z" fill="#fff" stroke="#223"/><rect x="5" y="7" width="8" height="7" fill="#6a9a30"/><path d="M9 7v7M5 10.500h8" stroke="#fff"/></svg><span>Sin título 1 - OpenOffi...</span></div>
      <div class="task"><svg class="task-ic" viewBox="0 0 16 16"><path d="M1 3h5l1 2h7v9H1z" fill="#f4d468" stroke="#a88020"/><path d="M1 7h14v7H1z" fill="#fbe68c" stroke="#a88020"/></svg><span>dasylab</span></div>
      <div class="task"><svg class="task-ic" viewBox="0 0 16 16"><rect x="3" y="1" width="9" height="10" rx="1" fill="#a8d4f4" stroke="#6a8ab0"/><rect x="4" y="11" width="7" height="4" fill="#d4d4d4" stroke="#888"/></svg><span>Mi PC</span></div>
      <div class="task active"><span class="app-logo small">D</span><span>DASYLab10-Net - ET...</span></div>
    </div>
    <div class="lang">ES</div>
    <div class="tray"><span class="chev-btn"><svg viewBox="0 0 12 12"><path d="M8 2L4 6l4 4" fill="none" stroke="#fff" stroke-width="2"/></svg></span><span class="clock">14:57</span></div>
  </footer>
</div>
</body>
</html>
```

FILE: styles.css
```css
* { box-sizing: border-box; }
html, body { margin: 0; padding: 0; background: #ece9d8; }
body { font: 12px Roboto, "Liberation Sans", sans-serif; color: #000; overflow: hidden; }
.defs { position: absolute; }
p, h1 { margin: 0; font-weight: normal; }
.sy-a { font: bold 11px "Liberation Serif", serif; fill: #1e3a8a; }
.sy-x { font: bold 9px "Liberation Serif", serif; fill: #12208c; }
.sy-big { font: bold 17px "Liberation Serif", serif; fill: #1a2a70; }
.sy-t { font: bold 13px "Liberation Serif", serif; fill: #2a3a70; }

.screen { position: relative; width: 1024px; height: 768px; overflow: hidden; background: #ece9d8; }
.app { display: flex; flex-direction: column; height: 738px; }

/* main title */
.titlebar { height: 26px; flex: none; display: flex; align-items: center; padding: 0 1px 1px 5px; gap: 2px;
  background: linear-gradient(#0058ee 0%, #3593ff 6%, #127dff 10%, #036ffc 14%, #0262ee 20%, #0057e5 26%, #0054e3 40%, #0055eb 56%, #005bf5 66%, #026afe 76%, #0062ef 86%, #0052d6 92%, #0040ab 96%, #003092 100%); }
.app-logo { width: 15px; height: 16px; flex: none; background: linear-gradient(#f4f4f4, #bbb); border: 1px solid #999; border-radius: 2px; color: #c01018;
  font: italic bold 13px/14px "Liberation Serif", serif; text-align: center; }
.app-title { flex: 1; margin-left: 0; color: #fff; font: bold 13px "Open Sans", sans-serif; letter-spacing: -.13px; text-shadow: 1px 1px 0 #0f1089; white-space: nowrap; overflow: hidden; }

.cap-btn { flex: none; width: 20px; height: 20px; border-radius: 3px; border: 1px solid #dfe6f8; display: block; overflow: hidden; }
.cap-btn svg { display: block; width: 18px; height: 18px; }
.cap-btn.big { width: 21px; height: 21px; }
.cap-btn.big svg { width: 19px; height: 19px; }
.blue { background: radial-gradient(circle at 30% 30%, #6f97f0, #3e66d8 70%, #2e52c4); }
.red { background: radial-gradient(circle at 30% 30%, #f09070, #e0562a 70%, #c03810); }
.dim { background: #6b75c9; border-color: #7b88d4; }
.dim svg { opacity: .28; }

/* menu */
.menubar { height: 20px; flex: none; display: flex; align-items: center; gap: 11px; padding-left: 6px; background: #ece9d8; font-size: 11px; letter-spacing: -.15px; border-bottom: 1px solid #fff; }

/* toolbar */
.toolbar { height: 32px; flex: none; display: flex; align-items: center; padding-left: 9px; gap: 14px; background: #ece9d8; border-top: 1px solid #aca899; border-bottom: 2px solid #9d9a8a; }
.tb-group { display: flex; align-items: center; gap: 7px; flex: none; }
.tb-wide { margin-left: 5px; }
.tb-tight { margin-left: -8px; gap: 5px; }
.ic { width: 16px; height: 16px; flex: none; display: block; }
.combo { width: 165px; height: 22px; margin-left: 6px; background: #fff; border: 1px solid #7f9db9; display: flex; align-items: center; flex: none; }
.combo-text { flex: 1; padding-left: 3px; font-size: 13px; }
.combo-btn { width: 16px; height: 20px; background: linear-gradient(#dbe6fb, #b4c8f4); position: relative; }
.combo-btn::after { content: ""; position: absolute; left: 4px; top: 4px; width: 6px; height: 6px; border: solid #4d6185; border-width: 0 2px 2px 0; transform: rotate(45deg); }
.help { width: 15px; height: 15px; border-radius: 50%; margin-left: 1px; flex: none; background: radial-gradient(circle at 40% 40%, #3a78e0, #103a9a 75%, #d8e0f0 80%); color: #fff; font: bold 11px/15px "Liberation Serif", serif; text-align: center; }
.nums { display: flex; gap: 8px; margin-left: 8px; flex: none; }
.num { width: 15px; height: 15px; border-radius: 50%; background: radial-gradient(circle at 40% 35%, #d8d8d8, #8c8c8c 85%); color: #4a4a4a; font: bold 12px/15px "Liberation Serif", serif; text-align: center; }
.num.on { background: radial-gradient(circle at 40% 35%, #a8ec90, #52b83a 85%); color: #0a40d0; }
.num.sep { margin-left: 8px; }
.tb-end { width: 1px; height: 29px; background: #aca899; margin-left: 4px; }

/* work area */
.work { flex: 1; min-height: 0; display: flex; flex-direction: column; }
.work-top { height: 478px; flex: none; display: flex; }
.side { width: 225px; flex: none; display: flex; }
.side-panel { flex: 1; padding: 2px 0 0 5px; border-left: 2px solid #aca899; }
.tab { width: 70px; height: 20px; background: #fff; border: 1px solid #aca899; border-top: 2px solid #f0a020; padding: 2px 0 0 5px; font-size: 12px; }
.tree { height: 460px; background: #fff; border: 2px solid #555; border-right: 0; border-bottom: 0; position: relative; padding: 6px 0 0 11px; display: flex; gap: 5px; }
.tree-toggle { width: 9px; height: 9px; border: 1px solid #777; background: linear-gradient(#fff, #ddd); position: relative; }
.tree-toggle::after { content: ""; position: absolute; left: 1px; top: 3px; width: 5px; height: 1px; background: #000; }
.tree-folder { width: 14px; height: 11px; background: #f0c040; }
.splitter { width: 13px; flex: none; border-left: 2px solid #000; border-right: 2px solid #716f64; background: #ece9d8; }
.canvas-wrap { flex: 1; min-width: 0; display: flex; flex-direction: column; padding-right: 4px; padding-bottom: 3px; }
.canvas-row { flex: 1; min-height: 0; display: flex; }
.canvas { flex: 1; position: relative; background: #fff; overflow: hidden; }
.wires { position: absolute; left: 0; top: 0; width: 780px; height: 460px; }
.w-edge-g { stroke: #00f000; stroke-width: 4; fill: none; }
.w-core-k { stroke: #000; stroke-width: 2; fill: none; }
.w-edge-k { stroke: #000; stroke-width: 4; fill: none; }
.w-core-g { stroke: #00f000; stroke-width: 2; fill: none; }
.junctions { fill: #00f000; stroke: #000; }
.vscroll { width: 15px; flex: none; display: flex; flex-direction: column; background: #f7f6ef; padding-top: 1px; }
.sb-btn { display: block; width: 14px; height: 15px; border: 1px solid #fff; border-radius: 2px; background: linear-gradient(135deg, #e1eafe, #b4c8f6); position: relative; flex: none; }
.sb-btn::after { content: ""; position: absolute; left: 3px; top: 5px; width: 5px; height: 5px; border: solid #4d6185; border-width: 2px 0 0 2px; transform: rotate(45deg); }
.sb-btn.blank::after { display: none; }
.sb-btn.down::after { transform: rotate(225deg); top: 2px; }
.sb-btn.left::after { transform: rotate(-45deg); left: 4px; top: 3px; }
.sb-btn.right::after { transform: rotate(135deg); left: 2px; top: 3px; }
.sb-thumb { display: block; width: 14px; height: 16px; margin-top: 2px; border: 1px solid #fff; border-radius: 2px; background: repeating-linear-gradient(#c9d8fa 0 2px, #8fa8e0 2px 3px); flex: none; }
.sb-fill { flex: 1; }
.hscroll { height: 15px; flex: none; display: flex; background: linear-gradient(#f4f3ec, #fcfcfa); padding: 1px 0 0 1px; }
.sb-thumb-h { width: 17px; height: 14px; margin-left: 1px; border: 1px solid #fff; border-radius: 2px; background: linear-gradient(135deg, #e1eafe, #b4c8f6); }

/* diagram */
.node { position: absolute; width: 63px; background: #ece9d8; border-right: 1px solid #808080; border-bottom: 1px solid #808080; display: flex; flex-direction: column; }
.n-gen { left: 17px; top: 329px; height: 127px; }
.n-ari { left: 113px; top: 329px; height: 127px; }
.n-per { left: 225px; top: 329px; height: 47px; }
.n-fft { left: 417px; top: 329px; height: 47px; }
.n-rec { left: 417px; top: 392px; height: 47px; }
.n-up1 { left: 33px; top: 240px; height: 40px; }
.n-up2 { left: 137px; top: 240px; height: 40px; }
.n-r1 { left: 521px; top: 265px; height: 47px; }
.n-r2 { left: 521px; top: 329px; height: 47px; }
.node-title { height: 10px; flex: none; border-bottom: 1px solid #808080; font: 11px/10px "Liberation Sans", sans-serif; letter-spacing: -.25px; text-align: center; white-space: nowrap; box-sizing: content-box; margin-bottom: -1px; }
.node-body { flex: 1; min-height: 0; display: flex; }
.ports-in { display: flex; flex-direction: column; gap: 1px; flex: none; width: 10px; }
.ports-out { display: flex; flex-direction: column; gap: 1px; flex: none; width: 11px; margin-left: auto; border-left: 1px solid #808080; }
.offset { margin-top: 7px; }
.offset-b { margin-top: 10px; }
.offset-t { margin-top: 10px; }
.n-rec .offset { margin-top: 8px; }
.port-in { display: block; height: 15px; background: linear-gradient(#0b5cab, #003490); color: #fff; font: 11px/15px "Liberation Sans", sans-serif; text-align: center; flex: none; }
.port-in.short { height: 5px; }
.port-out { display: block; height: 15px; position: relative; background: #00f000; flex: none; }
.port-out.short { height: 6px; margin-top: 19px; }
.port-out::after { content: ""; position: absolute; left: 0; bottom: 0; width: 6px; height: 2px; background: #f00; }
.art { flex: 1; min-width: 0; display: flex; align-items: center; justify-content: center; }
.art-gen { width: 44px; height: 26px; }
.art-ari { width: 28px; height: 22px; margin-top: 12px; }
.art-per { width: 40px; height: 32px; }
.art-fft { width: 40px; height: 33px; }
.art-rec { width: 44px; height: 36px; margin-left: -2px; }
.art-up1 { width: 32px; height: 20px; }
.art-wide { align-items: flex-end; padding: 0 0 0 4px; }
.art-scheme { flex-direction: column; align-items: flex-end; padding-right: 16px; font: 6px/8px "Liberation Sans", sans-serif; color: #fff; justify-content: flex-end; padding-bottom: 3px; }
.scheme-a { background: #3a3a3a; width: 15px; text-align: center; align-self: center; margin-right: 16px; }
.scheme-b { background: #3a3a3a; width: 21px; height: 13px; text-align: center; }

/* bottom */
.work-bottom { flex: 1; min-height: 0; display: flex; padding-top: 5px; align-items: stretch; }
.log { width: 608px; margin-left: 2px; flex: none; background: #fff; border-top: 1px solid #333; border-left: 2px solid #555; display: flex; height: 147px; align-self: flex-start; }
.log-text { flex: 1; padding: 4px 0 0 213px; font: 12.500px/16px "Noto Sans", "Liberation Sans", sans-serif; }
.log-scroll { width: 15px; flex: none; display: flex; flex-direction: column; background: #f7f6ef; }
.sb-thumb-v { display: block; width: 14px; height: 33px; border: 1px solid #fff; border-radius: 2px; background: linear-gradient(90deg, #cddbfb, #a8c0f4); flex: none; }
.log-scroll .sb-btn.blank { margin-top: 2px; }
.fifo { width: 186px; margin-left: 5px; flex: none; background: #fff; border: 1px solid #7f9db9; display: flex; flex-direction: column; height: 156px; overflow: hidden; font-size: 11px; }
.fifo-head { height: 19px; padding-top: 3px; box-sizing: content-box; flex: none; display: flex; align-items: center; background: #ece9d8; border-bottom: 1px solid #d4d0c0; }
.fh-a { width: 111px; padding-left: 9px; border-right: 1px solid #aca899; flex: none; }
.fh-b { padding-left: 8px; }
.fifo-rows { flex: 1; min-height: 0; overflow: hidden; }
.fr { height: 14px; line-height: 14px; padding-left: 7px; width: 112px; border-right: 1px solid #ece9d8; border-bottom: 1px solid #ece9d8; white-space: nowrap; }
.fifo-scroll { height: 15px; flex: none; display: flex; background: #f7f6ef; }
.sb-thumb-f { width: 154px; background: linear-gradient(#d5e1fb, #bccff7); border: 1px solid #fff; border-radius: 2px; }
.fifo-scroll .sb-btn { flex: none; }
.strip { width: 24px; flex: none; padding-top: 142px; background: #ece9d8; }
.strip-blue { display: block; width: 17px; height: 11px; background: #0a3ab0; }
.mdi { flex: 1; margin-right: 4px; margin-top: 2px; height: 158px; background: #808080; border-top: 1px solid #404040; border-left: 1px solid #404040; }

/* status */
.status { height: 16px; flex: none; display: flex; justify-content: flex-end; background: #ece9d8; padding-right: 4px; gap: 4px; align-items: stretch; }
.st-cell { width: 55px; font: 12px/15px "Liberation Sans", sans-serif; padding-left: 6px; border: 1px solid #aca899; border-width: 1px 0 0 1px; }
.st-dark { width: 30px; background: #222; }

/* floating windows */
.win { position: absolute; background: #6e7fd8; padding: 0 4px 5px; border-radius: 8px 8px 0 0; display: flex; flex-direction: column; }
.w-chart { left: 36px; top: 67px; width: 461px; height: 270px; }
.w-rec { left: 0; top: 382px; width: 219px; height: 299px; }
.w-meter { left: 751px; top: 84px; width: 257px; height: 620px; }
.cap { height: 29px; flex: none; margin: 0 -4px; padding: 3px 6px 0; display: flex; align-items: center; gap: 3px; border-radius: 8px 8px 0 0; background: linear-gradient(#8aa4ea, #7b97e2 20%, #7a98e4 60%, #7590de); }
.cap-icon { width: 16px; height: 16px; flex: none; margin-right: 0; }
.cap-text { flex: 1; color: #d6e2f9; font: bold 13px "Open Sans", sans-serif; white-space: nowrap; overflow: hidden; }
.meter-icon { width: 16px; height: 12px; flex: none; background: #4d8a30; border: 1px solid #444; color: #111; font: 10px/10px "Liberation Sans", sans-serif; text-align: center; }
.imenu { height: 21px; flex: none; background: #ece9d8; color: #a5a392; display: flex; align-items: center; gap: 13px; padding-left: 5px; font-size: 11px; letter-spacing: -.15px; text-shadow: 1px 1px 0 #fff; border-bottom: 1px solid #aca899; }
.imenu-rec { padding-left: 5px; gap: 12px; }
.itools { height: 29px; flex: none; background: #ece9d8; display: flex; align-items: center; padding-left: 4px; gap: 14px; border-bottom: 1px solid #000; overflow: hidden; }
.itools-rec { padding-left: 3px; height: 30px; }
.ic-btn { width: 20px; height: 20px; margin: -2px; display: flex; align-items: center; justify-content: center; border-radius: 3px; flex: none; }
.ic-btn.soft { background: #dedbcc; border: 1px solid #e8e6da; }
.ic-btn.sel { background: #fff; border: 1px solid #3c7fb1; }
.plot { display: block; flex: none; background: #bfbfbf; border-bottom: 1px solid #fff; }
.plot-chart { width: 451px; height: 185px; }
.plot-rec { width: 211px; height: 213px; }
.lblbox { fill: #bfbfbf; stroke: #808080; }
.ax { stroke: #000; fill: none; }
.yl { font: 14px "Liberation Sans", sans-serif; letter-spacing: -.8px; text-anchor: end; }
.red { fill: #f00; }
.navy { fill: #000080; }
.xl { font: 14px "Liberation Sans", sans-serif; letter-spacing: -.65px; fill: #111; }
.mid { text-anchor: middle; }
.hz { letter-spacing: 0; }
.lg { font: 9.500px "Liberation Sans", sans-serif; fill: #111; }
.bevel { fill: none; stroke: #808080; }
.sbt { fill: #cddbfa; stroke: #fff; }
.chev { fill: none; stroke: #4d6185; stroke-width: 2; }

.meters { flex: 1; min-height: 0; background: #bfbfbf; padding: 2px 1px 0; display: flex; flex-direction: column; gap: 2px; }
.meter { height: 63px; flex: none; border: 1px solid; border-color: #fff #808080 #808080 #fff; }
.meter-label { height: 16px; text-align: center; font: 12px/15px "Liberation Sans", sans-serif; color: #000; }
.meter-value { height: 41px; margin: 0 4px; background: #000; border: 2px solid; border-color: #808080 #fff #fff #808080; color: #00ee00; font: 38px/36px "Liberation Sans", sans-serif; text-align: right; padding-right: 5px; overflow: hidden; letter-spacing: -.2px; }

.win-min { position: absolute; top: 707px; width: 158px; height: 31px; display: flex; align-items: center; gap: 3px; padding: 0 5px; background: linear-gradient(#7b97e2, #7a98e4 60%, #7590de); border: 1px solid #6e7fd8; border-radius: 7px; }
.m1 { left: 1px; } .m2 { left: 161px; } .m3 { left: 321px; } .m4 { left: 481px; } .m5 { left: 801px; }
.win-min .cap-text { letter-spacing: -.1px; }

.marks { position: absolute; left: 0; top: 0; width: 1024px; height: 768px; pointer-events: none; }
.marks ellipse { fill: none; stroke: #0b7a0b; stroke-width: 3; }

/* taskbar */
.taskbar { position: absolute; left: 0; top: 738px; width: 1024px; height: 30px; display: flex; align-items: stretch;
  background: linear-gradient(#1f2f86 0, #3165c4 3%, #3682e5 6%, #4490e6 10%, #3883e5 12%, #2b71e0 15%, #2663da 18%, #235bd6 20%, #2258d5 23%, #2157d6 38%, #245ddb 54%, #2562df 86%, #245fdc 89%, #2158d4 92%, #1d4ec0 95%, #1941a5 98%); }
.start { width: 103px; flex: none; display: flex; align-items: center; gap: 6px; padding-left: 10px; border-radius: 0 10px 10px 0; background: linear-gradient(#3f8f3f, #3a9a3c 10%, #459e45 50%, #3c8a3c 85%, #2c6e2c); box-shadow: inset -3px 0 4px #1f5a1f; color: #fff; font: italic bold 18px "Liberation Sans", sans-serif; text-shadow: 1px 1px 1px #1a4a1a; }
.flag { width: 18px; height: 18px; flex: none; }
.tasks { display: flex; gap: 2px; margin-left: 10px; padding-top: 3px; flex: none; }
.task { width: 158px; height: 24px; display: flex; align-items: center; gap: 3px; padding-left: 10px; color: #fff; font-size: 11.500px; white-space: nowrap; border-radius: 2px; background: linear-gradient(#3c81f3, #3477e8 50%, #2f70e4); border-top: 1px solid #5a95f5; }
.task.active { background: #1e52b7; border: 1px solid #18429a; width: 160px; margin-left: -1px; }
.task-ic { width: 16px; height: 16px; flex: none; }
.app-logo.small { line-height: 14px; }
.lang { margin-left: auto; margin-top: 5px; width: 17px; height: 16px; background: #3c81d8; color: #fff; font-size: 11.500px; line-height: 16px; text-align: center; }
.tray { width: 57px; margin-left: 19px; flex: none; display: flex; align-items: center; position: relative; color: #fff; font-size: 11.500px; padding-left: 15px; background: linear-gradient(#0f8fe8, #13a0ee 12%, #1090e8 50%, #0f80e0); border-left: 1px solid #0c5ac0; }
.chev-btn { position: absolute; left: -9px; top: 6px; width: 18px; height: 18px; border-radius: 50%; background: radial-gradient(circle at 45% 35%, #7cc4f8, #1a60d8 80%); border: 1px solid #bcdcf8; display: flex; align-items: center; justify-content: center; }
.chev-btn svg { width: 12px; height: 12px; }
```
